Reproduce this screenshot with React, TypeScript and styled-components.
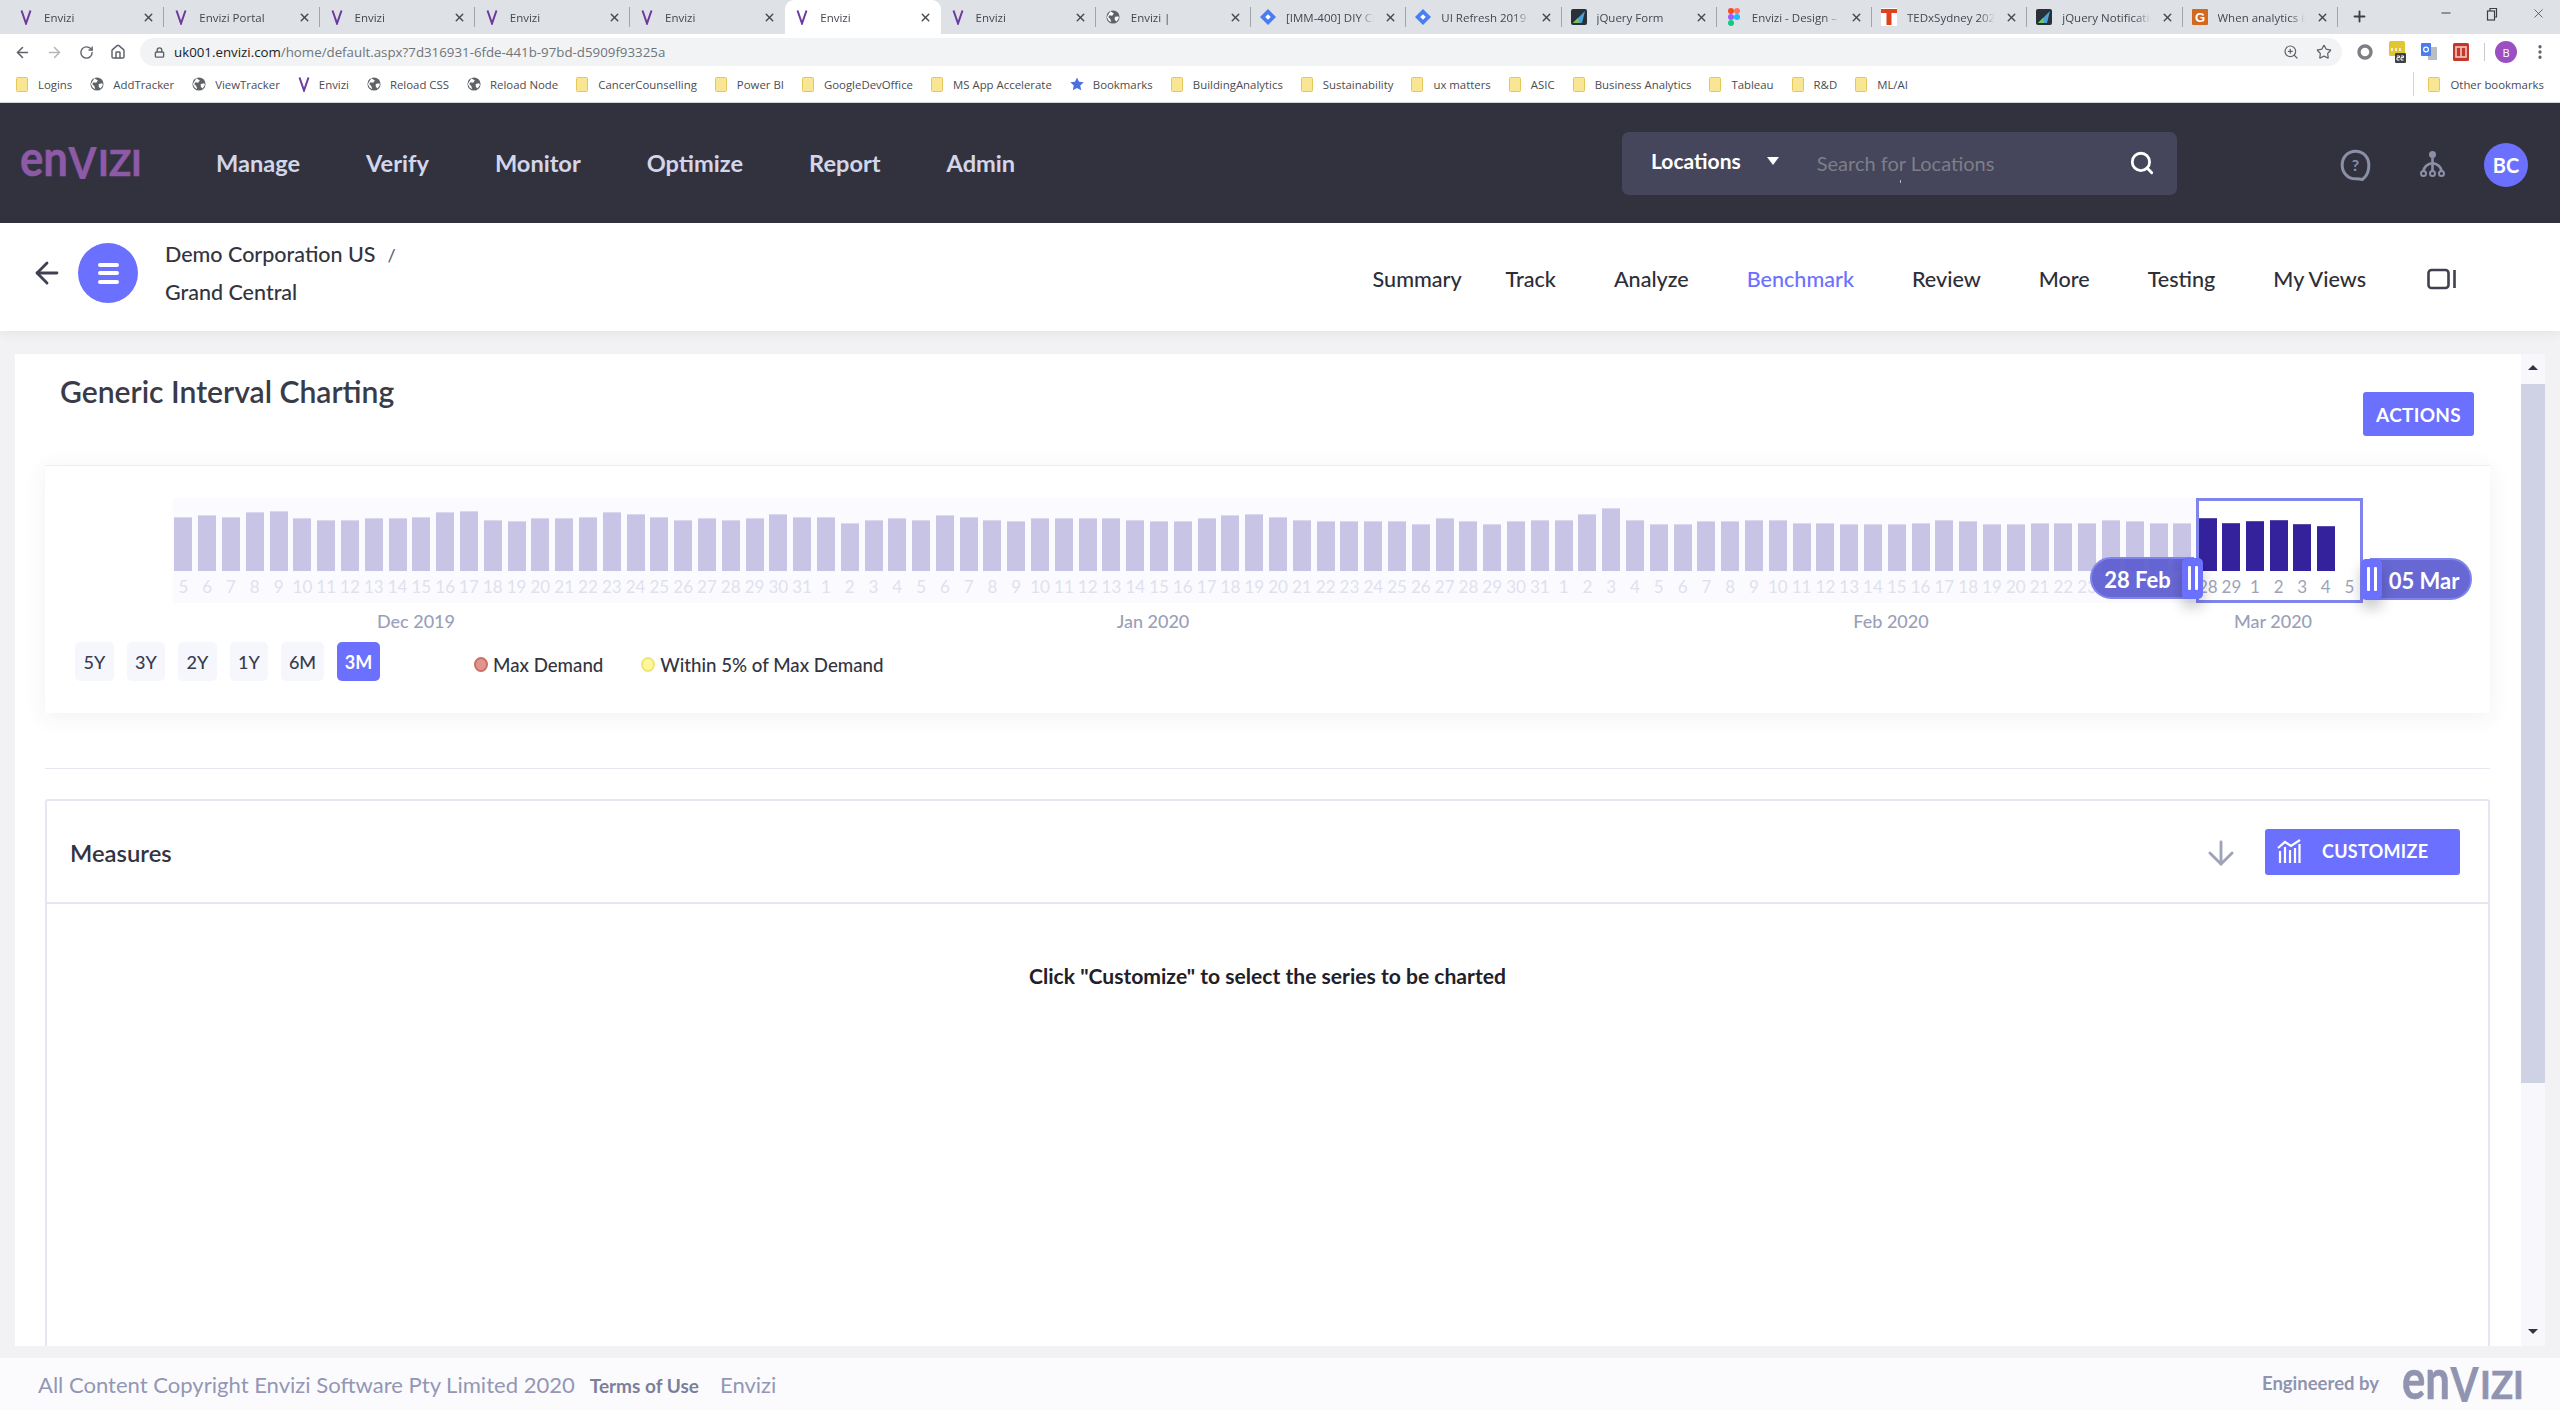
import React from 'react';
import styled, { createGlobalStyle } from 'styled-components';
import { ArrowLeft, ArrowRight, ArrowDown, RotateCw, Home, Lock, ZoomIn, Star, X, Plus, Minus, Search, MoreVertical } from 'lucide-react';

const Global = createGlobalStyle`
  html, body { margin: 0; padding: 0; background: #fff; }
  * { box-sizing: border-box; }
`;
const UI = `"Lato", "Noto Sans", sans-serif`;
const CHROME = `"Open Sans", "Noto Sans", sans-serif`;

const Shell = styled.div`
  width: 2560px; height: 1410px; overflow: hidden; display: flex; flex-direction: column;
  font-family: ${UI}; background: #f2f2f4;
`;

/* ---------- browser chrome ---------- */
const TabStrip = styled.div`
  height: 34px; background: #dee1e6; display: flex; padding-left: 9px; align-items: stretch; flex: none;
`;
const Tab = styled.div<{ $active?: boolean; $noSep?: boolean }>`
  position: relative; width: 155.25px; flex: none; display: flex; align-items: center; gap: 10px;
  padding: 0 9px 0 9px; font: 400 11.5px ${CHROME}; color: #45474d;
  background: ${p => (p.$active ? '#fff' : 'transparent')};
  border-radius: ${p => (p.$active ? '9px 9px 0 0' : '0')};
  &::after {
    content: ''; position: absolute; right: 0; top: 7px; height: 20px; width: 1px;
    background: ${p => (p.$noSep ? 'transparent' : '#a2a4a9')};
  }
`;
const FavSlot = styled.span`
  width: 16px; flex: none; display: flex; justify-content: center; align-items: center;
`;
const TabTitle = styled.span`
  flex: 1; min-width: 0; white-space: nowrap; overflow: hidden;
  mask-image: linear-gradient(to right, #000 82%, transparent 100%);
`;
const TabClose = styled(X)`flex: none; color: #45474d;`;
const NewTab = styled(Plus)`flex: none; color: #3c4043; margin: 8px 0 0 13px;`;
const WindowControls = styled.div`
  margin-left: auto; display: flex; align-items: flex-start; padding: 6px 14px 0 0; gap: 32px; color: #3c4043;
`;
const RestoreIcon = styled.svg`width: 14px; height: 14px; margin-top: 1px;`;

const Toolbar = styled.div`
  height: 32px; background: #fff; display: flex; align-items: flex-end; padding: 0 12px 0 13px; flex: none;
`;
const NavIcons = styled.div`
  display: flex; gap: 14px; height: 28px; align-items: center; flex: none;
`;
const NavIconSlot = styled.span<{ $dim?: boolean }>`
  width: 18px; display: flex; justify-content: center; color: ${p => (p.$dim ? '#b4b6ba' : '#5f6368')};
`;
const Omnibox = styled.div`
  margin-left: 13px; width: 2202px; height: 28px; border-radius: 14px; background: #f1f3f4; flex: none;
  display: flex; align-items: center; padding: 0 10px 0 14px; color: #5f6368;
`;
const Url = styled.span`
  margin-left: 9px; font: 400 13.3px ${CHROME}; color: #70757a; white-space: nowrap;
  b { font-weight: 400; color: #202124; }
`;
const OmniActions = styled.div`
  margin-left: auto; display: flex; gap: 17px; align-items: center; color: #5f6368;
`;
const Extensions = styled.div`
  margin-left: 14px; display: flex; gap: 14px; height: 28px; align-items: center; flex: none;
`;
const ExtSep = styled.span`width: 1px; height: 18px; background: #c9cbcf;`;
const ExtAvatar = styled.span`
  width: 22px; height: 22px; border-radius: 50%; background: #9c4fc0; color: #fff; margin-left: -4px;
  font: 400 11px ${CHROME}; display: flex; align-items: center; justify-content: center;
`;
const Kebab = styled(MoreVertical)`color: #5f6368; margin-left: 0;`;

const Bookmarks = styled.div`
  height: 37px; background: #fff; border-bottom: 1px solid #d2d3d6; display: flex; align-items: center;
  gap: 18px; padding: 0 16px; font: 400 11.4px ${CHROME}; color: #4a4c52; flex: none;
`;
const Bookmark = styled.span`
  display: flex; align-items: center; gap: 9px; white-space: nowrap; flex: none;
`;
const BookmarkEnd = styled.div`
  margin-left: auto; display: flex; align-items: center; gap: 14px;
`;
const BookmarkSep = styled.span`width: 1px; height: 24px; background: #d4d5d8;`;

type Fav = 'v' | 'globe' | 'jira' | 'jq' | 'figma' | 'ted' | 'g' | 'folder' | 'star';
const FavIcon: React.FC<{ kind: Fav }> = ({ kind }) => {
  switch (kind) {
    case 'v':
      return <svg width="12" height="16" viewBox="2 0 12 16"><path d="M3.5 1.5 8 14.5l4.5-13" fill="none" stroke="#6b3a9c" strokeWidth="2" /></svg>;
    case 'globe':
      return <svg width="14" height="14" viewBox="0 0 16 16"><circle cx="8" cy="8" r="7.5" fill="#5f6368" /><path d="M5 1.5 9 4 7 6.5 4 6 2.5 8 5 10.5 6 14 3 12 1 8zM10 8l4-1 .8 2-2.8 4-2-2z" fill="#fff" /></svg>;
    case 'jira':
      return <svg width="16" height="16" viewBox="0 0 16 16"><path d="M8 0l8 8-8 8-8-8z" fill="#4a7df0" /><path d="M8 5.2 10.8 8 8 10.8 5.2 8z" fill="#fff" /></svg>;
    case 'jq':
      return <svg width="16" height="18" viewBox="0 0 16 18"><rect y="1" width="16" height="16" rx="2" fill="#2a3038" /><path d="M2 15 14 3l-3 12z" fill="#4aa3d8" /><path d="M2 15l5-5 1 5z" fill="#7ac74f" /></svg>;
    case 'figma':
      return <svg width="12" height="18" viewBox="0 0 12 18"><rect x="0" y="0" width="6" height="6" rx="3" fill="#f24e1e" /><rect x="6" y="0" width="6" height="6" rx="3" fill="#ff7262" /><rect x="0" y="6" width="6" height="6" rx="3" fill="#a259ff" /><circle cx="9" cy="9" r="3" fill="#1abcfe" /><rect x="0" y="12" width="6" height="6" rx="3" fill="#0acf83" /></svg>;
    case 'ted':
      return <svg width="16" height="18" viewBox="0 0 16 18"><rect width="16" height="18" fill="#fff" /><rect x="0" y="1" width="16" height="4" fill="#e0401c" /><rect x="5.5" y="1" width="5" height="16" fill="#e0401c" /></svg>;
    case 'g':
      return <svg width="16" height="18" viewBox="0 0 16 18"><rect y="1" width="16" height="16" rx="1" fill="#d2691e" /><text x="8" y="14" textAnchor="middle" fontSize="13" fontWeight="700" fontFamily="Liberation Sans, sans-serif" fill="#fff">G</text></svg>;
    case 'star':
      return <svg width="14" height="14" viewBox="0 0 16 16"><path d="M8 .5l2.3 5 5.4.6-4 3.7 1.1 5.4L8 12.5l-4.8 2.7 1.1-5.4-4-3.7 5.4-.6z" fill="#4a6fe0" /></svg>;
    default:
      return <svg width="13" height="15" viewBox="0 0 13 15"><rect x=".5" y=".5" width="11" height="14" rx="1" fill="#f9e694" stroke="#e4c85c" /></svg>;
  }
};

const tabs: { t: string; k: Fav }[] = [
  { t: 'Envizi', k: 'v' }, { t: 'Envizi Portal', k: 'v' }, { t: 'Envizi', k: 'v' }, { t: 'Envizi', k: 'v' },
  { t: 'Envizi', k: 'v' }, { t: 'Envizi', k: 'v' }, { t: 'Envizi', k: 'v' }, { t: 'Envizi |', k: 'globe' },
  { t: '[IMM-400] DIY Charting', k: 'jira' }, { t: 'UI Refresh 2019 - Jira', k: 'jira' }, { t: 'jQuery Form', k: 'jq' },
  { t: 'Envizi - Design – Figma', k: 'figma' }, { t: 'TEDxSydney 2020', k: 'ted' }, { t: 'jQuery Notification', k: 'jq' },
  { t: 'When analytics in', k: 'g' },
];
const marks: { t: string; k: Fav }[] = [
  { t: 'Logins', k: 'folder' }, { t: 'AddTracker', k: 'globe' }, { t: 'ViewTracker', k: 'globe' }, { t: 'Envizi', k: 'v' },
  { t: 'Reload CSS', k: 'globe' }, { t: 'Reload Node', k: 'globe' }, { t: 'CancerCounselling', k: 'folder' }, { t: 'Power BI', k: 'folder' },
  { t: 'GoogleDevOffice', k: 'folder' }, { t: 'MS App Accelerate', k: 'folder' }, { t: 'Bookmarks', k: 'star' },
  { t: 'BuildingAnalytics', k: 'folder' }, { t: 'Sustainability', k: 'folder' }, { t: 'ux matters', k: 'folder' }, { t: 'ASIC', k: 'folder' },
  { t: 'Business Analytics', k: 'folder' }, { t: 'Tableau', k: 'folder' }, { t: 'R&D', k: 'folder' }, { t: 'ML/AI', k: 'folder' },
];

/* ---------- app header ---------- */
const Header = styled.header`
  height: 120px; background: #32323e; display: flex; align-items: center; padding: 0 32px 0 21px; flex: none;
`;
const MainNav = styled.nav`
  margin-left: 75px; display: flex; gap: 66px;
`;
const MainNavItem = styled.a`
  font-size: 23.6px; font-weight: 700; color: #d3d6ea; white-space: nowrap;
`;
const SearchBox = styled.div`
  position: relative; margin-left: auto; width: 555px; height: 63px; border-radius: 7px; background: #45465b;
  display: flex; align-items: center; padding: 0 22px 0 29px;
  &::after { content: ''; position: absolute; left: 278px; top: 48px; width: 1px; height: 3px; background: #b9bac6; }
`;
const ScopeLabel = styled.span`
  font-size: 21px; font-weight: 700; color: #fff; margin-top: -6px;
`;
const Caret = styled.span`
  margin: -4px 0 0 26px; width: 0; height: 0; border-left: 6px solid transparent; border-right: 6px solid transparent;
  border-top: 8px solid #fff;
`;
const Placeholder = styled.span`
  margin-left: 38px; font-size: 20px; color: #7d7e88;
`;
const SearchIcon = styled(Search)`margin-left: auto; color: #fff;`;
const HeaderIcons = styled.div`
  margin-left: 163px; display: flex; align-items: center;
`;
const HelpIcon = styled.svg`width: 31px; height: 32px; margin-top: 4px;`;
const TreeIcon = styled.svg`width: 27px; height: 27px; margin-left: 48px;`;
const Avatar = styled.span`
  margin: 3px 0 0 38px; width: 44px; height: 44px; border-radius: 50%; background: #6c70ff; color: #fff;
  display: flex; align-items: center; justify-content: center; font-size: 20px; font-weight: 700;
`;

/* ---------- sub header ---------- */
const SubHeader = styled.div`
  height: 108px; background: #fff; display: flex; padding: 20px 103px 0 35px; flex: none;
  box-shadow: 0 2px 12px rgba(40, 40, 60, .07); position: relative;
`;
const BackIcon = styled(ArrowLeft)`color: #3f4052; margin: 13px 0 0 -5px; flex: none;`;
const MenuCircle = styled.span`
  margin-left: 14px; width: 60px; height: 60px; border-radius: 50%; background: #6c70ff; flex: none;
  display: flex; flex-direction: column; align-items: center; justify-content: center; gap: 4.5px;
`;
const MenuLine = styled.span`width: 21px; height: 4px; border-radius: 2px; background: #fff;`;
const Crumbs = styled.div`
  margin: -7px 0 0 27px; display: flex; flex-direction: column; font-size: 21.5px; line-height: 37px; font-weight: 500; color: #33343f;
`;
const CrumbSlash = styled.span`margin-left: 12px; color: #5c6070; font-size: 18px;`;
const SubNav = styled.nav`
  margin: 16px 0 0 auto; height: 40px; display: flex; align-items: center; gap: 58px;
`;
const SubNavItem = styled.a<{ $active?: boolean }>`
  font-size: 21.55px; font-weight: 500; white-space: nowrap; color: ${p => (p.$active ? '#6c70ff' : '#2d2e38')};
  &:first-child { margin-right: -14px; }
`;
const ViewsIcon = styled.svg`width: 30px; height: 22px; margin-left: 3px;`;

/* ---------- main panel ---------- */
const Main = styled.main`
  flex: 1; min-height: 0; display: flex; padding: 23px 15px 12px;
`;
const Panel = styled.section`
  flex: 1; min-width: 0; background: #fff; display: flex;
`;
const PanelBody = styled.div`
  flex: 1; min-width: 0; overflow: hidden; padding: 0 31px 0 30px;
`;
const TitleRow = styled.div`
  height: 111px; display: flex; justify-content: space-between; align-items: flex-start; padding: 0 16px 0 15px;
`;
const Title = styled.h1`
  margin: 17px 0 0; font-size: 30.1px; line-height: 40px; font-weight: 600; color: #3a3b48;
`;
const PrimaryButton = styled.button`
  border: 0; border-radius: 3px; background: #6c70ff; color: #fff; font-family: ${UI}; font-weight: 700; font-size: 18px;
  display: flex; align-items: center; letter-spacing: .3px;
`;
const ActionsButton = styled(PrimaryButton)`
  margin-top: 38px; width: 111px; height: 44px; justify-content: center; font-size: 19px;
`;
const ChartCard = styled.div`
  height: 248px; border-top: 1px solid #eceef5; padding-top: 32px; box-shadow: 0 4px 22px rgba(60, 60, 110, .07); background: #fff;
`;
const ChartRow = styled.div`
  position: relative; margin-left: 128px; height: 105px; display: flex; width: 2190px;
`;
const Track = styled.div`
  width: 2023px; flex: none; display: flex; background: #fbfbff;
`;
const Column = styled.div`
  flex: 1; min-width: 0; display: flex; flex-direction: column; align-items: center; padding-right: 3px;
`;
const WindowColumn = styled.div`
  width: 23.6px; flex: none; display: flex; flex-direction: column; align-items: center;
  &:first-child { margin-left: -3px; }
`;
const BarSlot = styled.div<{ $h: number }>`
  height: ${p => p.$h}px; width: 100%; display: flex; align-items: flex-end; justify-content: center; flex: none;
`;
const Bar = styled.div<{ $on?: boolean }>`
  width: 18px; flex: none; background: ${p => (p.$on ? '#34229c' : '#c8c4e6')};
  border-top: 1.5px solid ${p => (p.$on ? '#5a4eaa' : '#dcd9ee')};
`;
const DayLabel = styled.span<{ $on?: boolean }>`
  height: 32px; line-height: 32px; font-size: 17px; font-weight: 400; white-space: nowrap;
  color: ${p => (p.$on ? '#9ea3b8' : '#dfe1ee')};
`;
const Window = styled.div`
  width: 167px; flex: none; display: flex; background: #fff; border: 3px solid #8085ee;
`;
const Flag = styled.div<{ $side: 'left' | 'right' }>`
  position: absolute; height: 42px; display: flex; align-items: center;
  top: ${p => (p.$side === 'left' ? '59px' : '60px')};
  width: ${p => (p.$side === 'left' ? '113px' : '111px')};
  left: ${p => (p.$side === 'left' ? '1917px' : '2188px')};
  flex-direction: ${p => (p.$side === 'left' ? 'row' : 'row-reverse')};
`;
const FlagText = styled.span<{ $side: 'left' | 'right' }>`
  flex: 1; height: 100%; display: flex; align-items: center; justify-content: center; color: #fff; font-size: 22px; font-weight: 700;
  padding-top: 2px;
  background: rgba(91, 91, 208, .92); border: 2px solid #8085ee;
  border-radius: ${p => (p.$side === 'left' ? '21px 0 0 21px' : '0 21px 21px 0')};
  margin-${p => (p.$side === 'left' ? 'right' : 'left')}: -12px;
  padding-${p => (p.$side === 'left' ? 'right' : 'left')}: ${p => (p.$side === 'left' ? '9px' : '6px')};
`;
const Handle = styled.span`
  position: relative; width: 21px; height: 41px; flex: none; border-radius: 5px; background: #6c70ff;
  display: flex; align-items: center; justify-content: center; gap: 4px; box-shadow: 0 8px 14px rgba(0, 0, 0, .22);
`;
const Grip = styled.i`width: 3px; height: 24px; background: #fff; border-radius: 1px;`;
const MonthAxis = styled.div`
  height: 36px; display: flex;
`;
const Month = styled.span<{ $gap: number }>`
  width: 120px; flex: none; margin-left: ${p => p.$gap}px; text-align: center; line-height: 36px; font-size: 18px; color: #9a9fb8; font-weight: 500;
`;
const RangeRow = styled.div`
  margin-top: 3px; padding-left: 30px; display: flex; align-items: center;
`;
const RangeButtons = styled.div`display: flex; gap: 13px;`;
const RangeButton = styled.button<{ $active?: boolean; $w: number }>`
  width: ${p => p.$w}px; height: 39px; border: 0; border-radius: 5px; padding: 0; font-family: ${UI};
  font-size: 18px; font-weight: ${p => (p.$active ? 700 : 500)};
  background: ${p => (p.$active ? '#6c70ff' : '#f6f7fd')}; color: ${p => (p.$active ? '#fff' : '#3a3b4e')};
`;
const Legend = styled.div`
  margin: 6px 0 0 94px; display: flex; gap: 38px;
`;
const LegendItem = styled.span`
  display: flex; align-items: center; gap: 5px; font-size: 18.7px; font-weight: 500; color: #33343f;
`;
const LegendDot = styled.i<{ $fill: string; $line: string }>`
  width: 14px; height: 15px; border-radius: 50%; background: ${p => p.$fill}; border: 2px solid ${p => p.$line};
`;
const Divider = styled.hr`
  margin: 55px 0 30px; border: 0; height: 1px; background: #e6e8f1;
`;
const MeasuresCard = styled.div`
  height: 640px; border: 2px solid #e4e7f2; border-radius: 3px;
`;
const MeasuresHead = styled.div`
  height: 103px; border-bottom: 2px solid #e4e7f2; display: flex; align-items: center; padding: 0 28px 0 23px;
`;
const MeasuresTitle = styled.h2`
  margin: 2px 0 0; font-size: 23.8px; font-weight: 600; color: #33343f;
`;
const SortIcon = styled(ArrowDown)`margin: 3px 0 0 auto; color: #9ea3b8;`;
const CustomizeButton = styled(PrimaryButton)`
  margin-left: 25px; width: 195px; height: 46px; padding: 0 0 2px 12px; gap: 21px;
`;
const Prompt = styled.p`
  margin: 59px 0 0; text-align: center; font-size: 21.1px; font-weight: 700; color: #1f2029;
`;

const Scrollbar = styled.div`
  width: 24px; flex: none; background: #f7f7fc; display: flex; flex-direction: column; align-items: center;
`;
const ScrollArrow = styled.i<{ $up?: boolean }>`
  width: 0; height: 0; border-left: 5px solid transparent; border-right: 5px solid transparent;
  ${p => (p.$up ? 'border-bottom: 5px solid #33334a; margin-top: 11px;' : 'border-top: 5px solid #33334a; margin: auto 0 12px;')}
`;
const ScrollThumb = styled.div`
  width: 24px; height: 699px; margin-top: 14px; background: #cfd2e4;
`;

/* ---------- footer ---------- */
const Footer = styled.footer`
  height: 52px; background: #fbfbfe; display: flex; align-items: center; padding: 1px 37px 0 38px; flex: none;
`;
const FooterText = styled.span`
  font-size: 22.05px; font-weight: 400; color: #9297b5; white-space: nowrap;
`;
const FooterLink = styled.a`
  margin: 2px 21px 0 15px; font-size: 19px; font-weight: 700; color: #7c7f9a; white-space: nowrap;
`;
const Engineered = styled.span`
  margin-left: auto; font-size: 18.5px; font-weight: 700; color: #9094b0; margin-top: -4px;
`;
const LogoSvg = styled.svg<{ $color: string; $ml: number; $h: number }>`
  width: 120px; height: ${p => p.$h}px; flex: none; margin-left: ${p => p.$ml}px; fill: ${p => p.$color};
  stroke: ${p => p.$color}; font-family: "Lato", sans-serif; font-weight: 700;
`;

const Logo: React.FC<{ color: string; ml?: number; h?: number }> = ({ color, ml = 0, h = 36 }) => (
  <LogoSvg $color={color} $ml={ml} $h={h} viewBox="0 0 120 36" preserveAspectRatio="none" aria-label="envizi">
    <text x="-1" y="32" fontSize="55" textLength="48" lengthAdjust="spacingAndGlyphs" strokeWidth=".6">en</text>
    <text x="47" y="35" fontSize="50" textLength="29" lengthAdjust="spacingAndGlyphs" strokeWidth=".2">V</text>
    <text x="77" y="32" fontSize="39" textLength="44" lengthAdjust="spacingAndGlyphs" strokeWidth=".6">IZI</text>
  </LogoSvg>
);

const tops = [66,60,66,51,47,69,74,74,69,69,66,51,47,74,78,69,69,66,51,56,66,74,69,74,69,56,66,
  66,83,74,69,74,60,66,74,78,69,69,69,69,74,78,78,69,60,56,66,74,78,78,78,78,87,69,78,87,78,74,
  74,56,39,74,87,87,78,78,74,74,83,83,87,87,87,83,74,78,87,87,83,83,83,74,78,83,83];
const dayLabels: number[] = [];
for (let d = 5; d <= 31; d++) dayLabels.push(d);
for (let d = 1; d <= 31; d++) dayLabels.push(d);
for (let d = 1; d <= 27; d++) dayLabels.push(d);
const heightOf = (t: number) => Math.round((228 - t) / 3);

const selected: { d: number; h: number }[] = [
  { d: 28, h: 53 }, { d: 29, h: 48 }, { d: 1, h: 50 }, { d: 2, h: 51 }, { d: 3, h: 47 }, { d: 4, h: 45 }, { d: 5, h: 0 },
];

export default function App() {
  return (
    <Shell>
      <Global />
      <TabStrip>
        {tabs.map((tab, i) => (
          <Tab key={i} $active={i === 5} $noSep={i === 4 || i === 5}>
            <FavSlot><FavIcon kind={tab.k} /></FavSlot>
            <TabTitle>{tab.t}</TabTitle>
            <TabClose size={13} strokeWidth={2.6} />
          </Tab>
        ))}
        <NewTab size={17} strokeWidth={2.6} />
        <WindowControls>
          <Minus size={14} />
          <RestoreIcon viewBox="0 0 14 14" fill="none" stroke="#3c4043" strokeWidth="1.2"><rect x="2.5" y="4" width="7" height="9" /><path d="M5 4V1.5h6.5v8.5H9.5" /></RestoreIcon>
          <X size={15} strokeWidth={1.2} />
        </WindowControls>
      </TabStrip>

      <Toolbar>
        <NavIcons>
          <NavIconSlot><ArrowLeft size={17} strokeWidth={2.2} /></NavIconSlot>
          <NavIconSlot $dim><ArrowRight size={17} strokeWidth={2.2} /></NavIconSlot>
          <NavIconSlot><RotateCw size={15} strokeWidth={2.2} /></NavIconSlot>
          <NavIconSlot><Home size={16} strokeWidth={2.2} /></NavIconSlot>
        </NavIcons>
        <Omnibox>
          <Lock size={11} strokeWidth={3} />
          <Url><b>uk001.envizi.com</b>/home/default.aspx?7d316931-6fde-441b-97bd-d5909f93325a</Url>
          <OmniActions>
            <ZoomIn size={16} strokeWidth={1.8} />
            <Star size={16} strokeWidth={1.8} />
          </OmniActions>
        </Omnibox>
        <Extensions>
          <svg width="18" height="18" viewBox="0 0 18 18"><circle cx="9" cy="9" r="6" fill="none" stroke="#7d7f83" strokeWidth="3.4" /></svg>
          <svg width="18" height="24" viewBox="0 0 18 24"><rect x="1" y="1" width="16" height="15" rx="1.5" fill="#e2c62f" /><path d="M4 8v3M8 8v3M12 8v3" stroke="#fff" strokeWidth="1.4" /><rect x="7" y="13" width="11" height="10" rx="1" fill="#3f4145" /><path d="M9 16h2.5v1.6H9V20h2.5M13 16h2.5v1.6H13V20h2.5" fill="none" stroke="#fff" strokeWidth="1" /></svg>
          <svg width="18" height="20" viewBox="0 0 18 20"><path d="M8 5h9v13H8z" fill="#b9bdc4" /><rect x="1" y="1" width="10" height="13" rx="1" fill="#4a7df0" /><circle cx="6" cy="7.5" r="2.4" fill="none" stroke="#fff" strokeWidth="1.2" /></svg>
          <svg width="18" height="20" viewBox="0 0 18 20"><rect x="1" y="1" width="16" height="18" rx="1.5" fill="#c4382c" /><rect x="4" y="5" width="10" height="10" fill="none" stroke="#f4c7c1" strokeWidth="1.6" /><path d="M9 5v10" stroke="#f4c7c1" strokeWidth="1.6" /></svg>
          <ExtSep />
          <ExtAvatar>B</ExtAvatar>
          <Kebab size={18} strokeWidth={2.4} />
        </Extensions>
      </Toolbar>

      <Bookmarks>
        {marks.map(m => (
          <Bookmark key={m.t}><FavIcon kind={m.k} />{m.t}</Bookmark>
        ))}
        <BookmarkEnd>
          <BookmarkSep />
          <Bookmark><FavIcon kind="folder" />Other bookmarks</Bookmark>
        </BookmarkEnd>
      </Bookmarks>

      <Header>
        <Logo color="#8c5aa6" h={33} />
        <MainNav>
          {['Manage', 'Verify', 'Monitor', 'Optimize', 'Report', 'Admin'].map(n => <MainNavItem key={n}>{n}</MainNavItem>)}
        </MainNav>
        <SearchBox>
          <ScopeLabel>Locations</ScopeLabel>
          <Caret />
          <Placeholder>Search for Locations</Placeholder>
          <SearchIcon size={26} strokeWidth={2.6} />
        </SearchBox>
        <HeaderIcons>
          <HelpIcon viewBox="0 0 29 30" fill="none" stroke="#8b90a8" strokeWidth="2.8">
            <path d="M14.5 2C7 2 2 8 2 15s5 13 12.5 13c2.5 0 4 0 6.5.6l1.6-1.6C25.5 24.5 27 20 27 15 27 8 22 2 14.5 2z" />
            <text x="14.5" y="20.5" textAnchor="middle" fontSize="15" fontWeight="700" fill="#8b90a8" stroke="none" fontFamily="Lato, sans-serif">?</text>
          </HelpIcon>
          <TreeIcon viewBox="0 0 27 27" fill="none" stroke="#8b90a8" strokeWidth="2">
            <circle cx="13.5" cy="4.5" r="3.5" fill="#8b90a8" stroke="none" />
            <path d="M13.5 8v14M13.5 13C7 14.5 5 17 4.5 21M13.5 13c6.5 1.5 8.5 4 9 8" strokeWidth="2.6" />
            <circle cx="4.5" cy="23.5" r="2.5" /><circle cx="13.5" cy="23.5" r="2.5" /><circle cx="22.5" cy="23.5" r="2.5" />
          </TreeIcon>
          <Avatar>BC</Avatar>
        </HeaderIcons>
      </Header>

      <SubHeader>
        <BackIcon size={34} strokeWidth={2} />
        <MenuCircle><MenuLine /><MenuLine /><MenuLine /></MenuCircle>
        <Crumbs>
          <span>Demo Corporation US<CrumbSlash>/</CrumbSlash></span>
          <span>Grand Central</span>
        </Crumbs>
        <SubNav>
          {['Summary', 'Track', 'Analyze', 'Benchmark', 'Review', 'More', 'Testing', 'My Views'].map(n => (
            <SubNavItem key={n} $active={n === 'Benchmark'}>{n}</SubNavItem>
          ))}
          <ViewsIcon viewBox="0 0 30 22" fill="none" stroke="#3f4052" strokeWidth="2.6">
            <rect x="1.5" y="2" width="20" height="18" rx="3" />
            <path d="M27.5 2v18" />
          </ViewsIcon>
        </SubNav>
      </SubHeader>

      <Main>
        <Panel>
          <PanelBody>
            <TitleRow>
              <Title>Generic Interval Charting</Title>
              <ActionsButton>ACTIONS</ActionsButton>
            </TitleRow>
            <ChartCard>
              <ChartRow>
                <Track>
                  {tops.map((t, i) => (
                    <Column key={i}>
                      <BarSlot $h={73}><Bar style={{ height: heightOf(t) }} /></BarSlot>
                      <DayLabel>{dayLabels[i]}</DayLabel>
                    </Column>
                  ))}
                </Track>
                <Window>
                  {selected.map(s => (
                    <WindowColumn key={s.d}>
                      <BarSlot $h={70}>{s.h > 0 && <Bar $on style={{ height: s.h }} />}</BarSlot>
                      <DayLabel $on>{s.d}</DayLabel>
                    </WindowColumn>
                  ))}
                </Window>
                <Flag $side="left"><FlagText $side="left">28 Feb</FlagText><Handle><Grip /><Grip /></Handle></Flag>
                <Flag $side="right"><FlagText $side="right">05 Mar</FlagText><Handle><Grip /><Grip /></Handle></Flag>
              </ChartRow>
              <MonthAxis>
                <Month $gap={311}>Dec 2019</Month>
                <Month $gap={617}>Jan 2020</Month>
                <Month $gap={618}>Feb 2020</Month>
                <Month $gap={262}>Mar 2020</Month>
              </MonthAxis>
              <RangeRow>
                <RangeButtons>
                  {[['5Y', 39], ['3Y', 38], ['2Y', 39], ['1Y', 38], ['6M', 43], ['3M', 43]].map(([l, w]) => (
                    <RangeButton key={l} $w={w as number} $active={l === '3M'}>{l}</RangeButton>
                  ))}
                </RangeButtons>
                <Legend>
                  <LegendItem><LegendDot $fill="#e0968d" $line="#cc6f64" />Max Demand</LegendItem>
                  <LegendItem><LegendDot $fill="#fdf69c" $line="#f1e66d" />Within 5% of Max Demand</LegendItem>
                </Legend>
              </RangeRow>
            </ChartCard>
            <Divider />
            <MeasuresCard>
              <MeasuresHead>
                <MeasuresTitle>Measures</MeasuresTitle>
                <SortIcon size={38} strokeWidth={1.8} />
                <CustomizeButton>
                  <svg width="24" height="26" viewBox="0 0 24 26" fill="none" stroke="#fff">
                    <path d="M1 10 8 4l6 4 9-6" strokeWidth="2.2" />
                    <path d="M3 25V13M8 25V9M13 25V12M18 25V10M22.5 25V6" strokeWidth="2.2" />
                  </svg>
                  CUSTOMIZE
                </CustomizeButton>
              </MeasuresHead>
              <Prompt>Click "Customize" to select the series to be charted</Prompt>
            </MeasuresCard>
          </PanelBody>
          <Scrollbar>
            <ScrollArrow $up />
            <ScrollThumb />
            <ScrollArrow />
          </Scrollbar>
        </Panel>
      </Main>

      <Footer>
        <FooterText>All Content Copyright Envizi Software Pty Limited 2020</FooterText>
        <FooterLink>Terms of Use</FooterLink>
        <FooterText>Envizi</FooterText>
        <Engineered>Engineered by</Engineered>
        <Logo color="#9094b0" ml={24} />
      </Footer>
    </Shell>
  );
}
